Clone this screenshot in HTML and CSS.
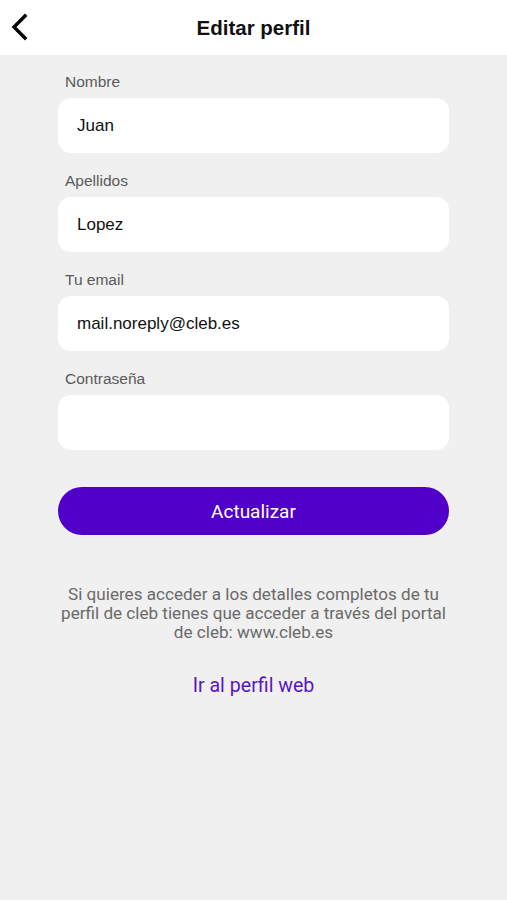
FILE: index.html
```html
<!DOCTYPE html>
<html>
<head>
    <title>Editar perfil</title>
    <link rel="stylesheet" href="styles.css">
</head>
<body>
    <div class="header">
        <a class="back" href="#">
            <svg width="30" height="30" viewBox="0 0 30 30"><path d="M22 4 L11 15 L22 26" fill="none" stroke="#000" stroke-width="3.4" stroke-linecap="square"/></svg>
        </a>
        <h1>Editar perfil</h1>
    </div>

    <div class="container">
        <form id="profileForm">
            <div class="field">
                <label>Nombre</label>
                <input type="text" value="Juan">
            </div>
            <div class="field">
                <label>Apellidos</label>
                <input type="text" value="Lopez">
            </div>
            <div class="field">
                <label>Tu email</label>
                <input type="email" value="mail.noreply@cleb.es">
            </div>
            <div class="field">
                <label>Contraseña</label>
                <input type="password">
            </div>
            <button type="submit">Actualizar</button>
        </form>

        <p class="info">Si quieres acceder a los detalles completos de tu perfil de cleb tienes que acceder a través del portal de cleb: www.cleb.es</p>

        <a class="web-link" href="#">Ir al perfil web</a>
    </div>
</body>
</html>
```

FILE: styles.css
```css
body { margin: 0; background: #f0f0f0; font-family: "Liberation Sans", Arial, sans-serif; }
.header { position: relative; height: 55px; background: white; display: flex; align-items: center; justify-content: center; }
.header h1 { margin: 0; font-size: 20.5px; font-weight: bold; color: #111; }
.back { position: absolute; left: 3px; top: 12px; display: block; width: 30px; height: 30px; }
.container { width: 391px; margin: 0 auto; padding-top: 17px; }
.field { margin-bottom: 18px; }
label { display: block; height: 20px; line-height: 20px; margin: 0 0 6px 7px; font-size: 15.5px; color: #5a5a5a; }
input { display: block; box-sizing: border-box; width: 100%; height: 55px; padding: 0 19px; border: none; border-radius: 13px;
        background: white; font-family: "Liberation Sans", Arial, sans-serif; font-size: 17px; color: #111; outline: none; }
button { display: block; width: 100%; height: 48px; margin-top: 37px; border: none; border-radius: 24px; background: #5000c8;
         color: white; font-family: Roboto, sans-serif; font-size: 19px; cursor: pointer; }
.info { margin: 50px -2px 0; text-align: center; font-family: Roboto, sans-serif; font-size: 17.1px; line-height: 19px; color: #6a6a6a; }
.web-link { display: block; margin-top: 32px; text-align: center; font-family: Roboto, sans-serif; font-size: 19.6px; line-height: 24px;
            color: #5a14c8; text-decoration: none; }
```
